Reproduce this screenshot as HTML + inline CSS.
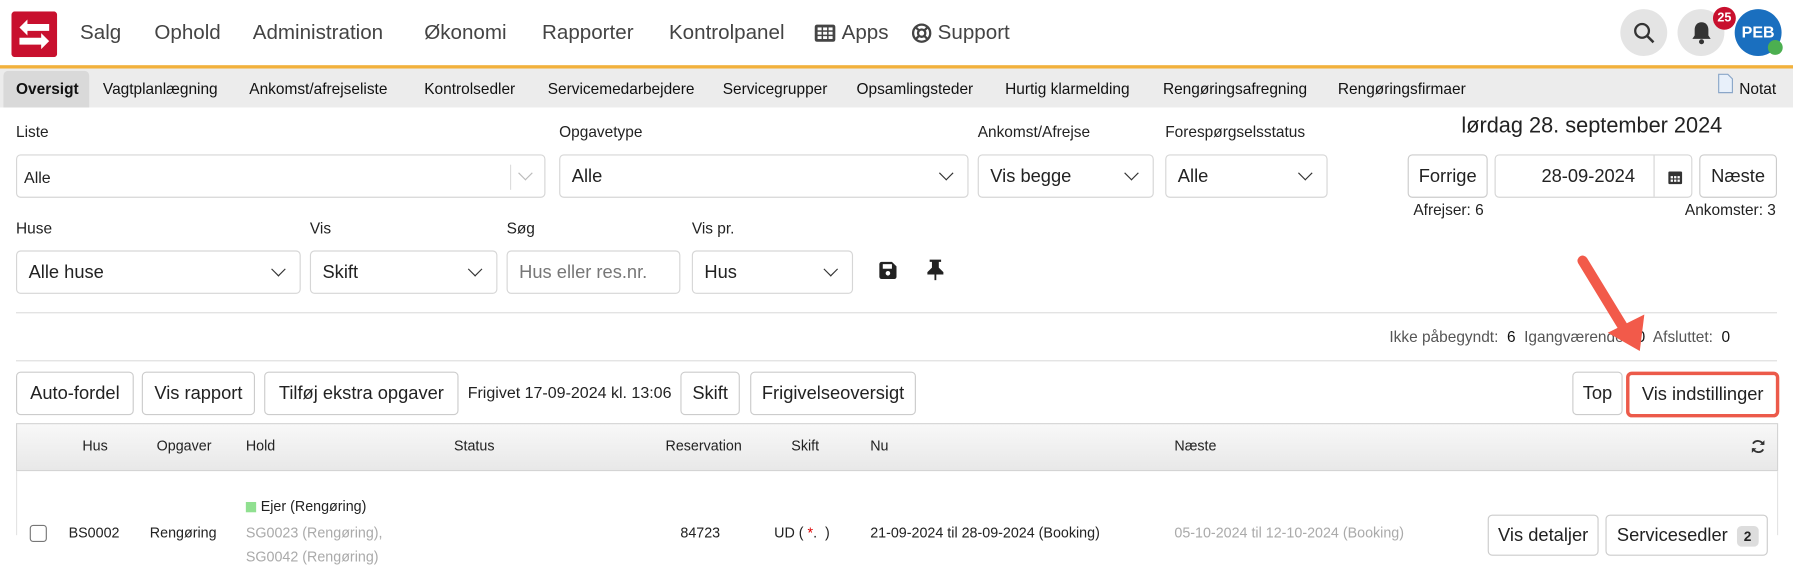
<!DOCTYPE html>
<html><head><meta charset="utf-8"><style>
*{box-sizing:border-box;margin:0;padding:0}
html,body{width:1793px;height:535px;overflow:hidden;background:#fff}
#r{position:absolute;left:0;top:0;width:1568px;height:468px;transform:scale(1.1435);transform-origin:0 0;font-family:"Liberation Sans Narrow","Liberation Sans",sans-serif;color:#222}
.a{position:absolute;white-space:nowrap}
.nav{font-family:"Liberation Sans",sans-serif;font-size:18px;color:#444;top:18px}
.sub{font-size:13.5px;top:70px;color:#111}
.lbl{font-size:13.5px;color:#222}
.box{position:absolute;border:1px solid #d6d6d6;border-radius:4px;background:#fff;font-size:16px;padding-left:10px;padding-top:2px;display:flex;align-items:center}
.chev{position:absolute;right:14px;top:11px;width:9px;height:9px;border-right:1.6px solid #333;border-bottom:1.6px solid #333;transform:rotate(45deg)}
.btn{position:absolute;border:1px solid #ccc;border-radius:4px;background:#fff;font-size:16px;display:flex;align-items:center;justify-content:center;color:#222;padding-top:2px}
.th{font-size:12.5px;top:383px;color:#222}
.td{font-size:12.5px;color:#222}
</style></head><body><div id="r">
<svg class="a" style="left:10px;top:10px" width="40" height="40" viewBox="0 0 40 40"><rect width="40" height="40" rx="3" fill="#c8102e"/><path d="M14 7 L7 14 L14 21 L14 17 L33 17 L33 11 L14 11Z" fill="#fff"/><path d="M26 19 L33 26 L26 33 L26 29 L7 29 L7 23 L26 23Z" fill="#fff"/></svg>
<div class="a nav" style="left:70px">Salg</div>
<div class="a nav" style="left:135px">Ophold</div>
<div class="a nav" style="left:221px">Administration</div>
<div class="a nav" style="left:371px">Økonomi</div>
<div class="a nav" style="left:474px">Rapporter</div>
<div class="a nav" style="left:585px">Kontrolpanel</div>
<svg class="a" style="left:712px;top:21px" width="19" height="16" viewBox="0 0 19 16"><rect x="0.5" y="0.5" width="18" height="15" rx="2" fill="#444"/><g fill="#fff"><rect x="3" y="3" width="3.5" height="2.5"/><rect x="7.8" y="3" width="3.5" height="2.5"/><rect x="12.6" y="3" width="3.5" height="2.5"/><rect x="3" y="6.8" width="3.5" height="2.5"/><rect x="7.8" y="6.8" width="3.5" height="2.5"/><rect x="12.6" y="6.8" width="3.5" height="2.5"/><rect x="3" y="10.6" width="3.5" height="2.5"/><rect x="7.8" y="10.6" width="3.5" height="2.5"/><rect x="12.6" y="10.6" width="3.5" height="2.5"/></g></svg>
<div class="a nav" style="left:736px">Apps</div>
<svg class="a" style="left:797px;top:20px" width="18" height="18" viewBox="0 0 18 18"><circle cx="9" cy="9" r="7.5" fill="none" stroke="#444" stroke-width="2"/><circle cx="9" cy="9" r="3.2" fill="none" stroke="#444" stroke-width="2"/><path d="M4 4l3 3M14 4l-3 3M4 14l3-3M14 14l-3-3" stroke="#444" stroke-width="2"/></svg>
<div class="a nav" style="left:820px">Support</div>
<div class="a" style="left:1417px;top:8px;width:41px;height:41px;border-radius:50%;background:#e4e4e4"></div>
<svg class="a" style="left:1428px;top:19px" width="20" height="20" viewBox="0 0 20 20"><circle cx="8" cy="8" r="6" fill="none" stroke="#333" stroke-width="2"/><path d="M12.5 12.5L18 18" stroke="#333" stroke-width="2.2"/></svg>
<div class="a" style="left:1467px;top:8px;width:41px;height:41px;border-radius:50%;background:#e4e4e4"></div>
<svg class="a" style="left:1479px;top:18px" width="18" height="22" viewBox="0 0 18 22"><path d="M9 1.5c-4 0-6 3-6 6.5v5L1 16h16l-2-3V8c0-3.5-2-6.5-6-6.5z" fill="#333"/><circle cx="9" cy="18.5" r="2.2" fill="#333"/></svg>
<div class="a" style="left:1517px;top:8px;width:41px;height:41px;border-radius:50%;background:#1a6fbf;color:#fff;font-family:'Liberation Sans',sans-serif;font-size:14px;font-weight:bold;text-align:center;line-height:41px">PEB</div>
<div class="a" style="left:1546px;top:35px;width:13px;height:13px;border-radius:50%;background:#4caf50"></div>
<div class="a" style="left:1498px;top:6px;width:20px;height:20px;border-radius:50%;background:#c8102e;color:#fff;font-family:'Liberation Sans',sans-serif;font-size:11px;font-weight:bold;text-align:center;line-height:20px">25</div>
<div class="a" style="left:0;top:57px;width:1568px;height:3px;background:#f2b13c"></div>
<div class="a" style="left:0;top:60px;width:1568px;height:34px;background:#ececec"></div>
<div class="a" style="left:3px;top:62px;width:75px;height:32px;background:#d9d9d9;border-radius:4px 4px 0 0"></div>
<div class="a sub" style="left:14px;font-weight:bold">Oversigt</div>
<div class="a sub" style="left:90px">Vagtplanlægning</div>
<div class="a sub" style="left:218px">Ankomst/afrejseliste</div>
<div class="a sub" style="left:371px">Kontrolsedler</div>
<div class="a sub" style="left:479px">Servicemedarbejdere</div>
<div class="a sub" style="left:632px">Servicegrupper</div>
<div class="a sub" style="left:749px">Opsamlingsteder</div>
<div class="a sub" style="left:879px">Hurtig klarmelding</div>
<div class="a sub" style="left:1017px">Rengøringsafregning</div>
<div class="a sub" style="left:1170px">Rengøringsfirmaer</div>
<svg class="a" style="left:1502px;top:64px" width="14" height="18" viewBox="0 0 14 18"><path d="M1 1h8l4 4v12H1z" fill="#e8f0fa" stroke="#8aa6c8"/></svg>
<div class="a sub" style="left:1521px">Notat</div>
<div class="a lbl" style="left:14px;top:108px">Liste</div>
<div class="a lbl" style="left:489px;top:108px">Opgavetype</div>
<div class="a lbl" style="left:855px;top:108px">Ankomst/Afrejse</div>
<div class="a lbl" style="left:1019px;top:108px">Forespørgselsstatus</div>
<div class="box" style="left:14px;top:135px;width:463px;height:38px;font-size:14px;padding-left:6px">Alle<div class="a" style="left:431px;top:8px;width:1px;height:22px;background:#ddd"></div><div class="chev" style="border-color:#bbb;right:12px"></div></div>
<div class="box" style="left:489px;top:135px;width:358px;height:38px">Alle<div class="chev"></div></div>
<div class="box" style="left:855px;top:135px;width:154px;height:38px">Vis begge<div class="chev"></div></div>
<div class="box" style="left:1019px;top:135px;width:142px;height:38px">Alle<div class="chev"></div></div>
<div class="a" style="left:1278px;top:100px;font-size:19px;color:#222">lørdag 28. september 2024</div>
<div class="btn" style="left:1231px;top:135px;width:70px;height:38px">Forrige</div>
<div class="box" style="left:1307px;top:135px;width:173px;height:38px;padding-left:40px">28-09-2024
<svg class="a" style="left:150px;top:12px" width="14" height="14" viewBox="0 0 14 14"><rect x="1" y="2" width="12" height="11" rx="1" fill="#333"/><g fill="#fff"><rect x="3" y="6" width="2" height="2"/><rect x="6" y="6" width="2" height="2"/><rect x="9" y="6" width="2" height="2"/><rect x="3" y="9" width="2" height="2"/><rect x="6" y="9" width="2" height="2"/><rect x="9" y="9" width="2" height="2"/></g></svg>
<div class="a" style="left:138px;top:0;width:1px;height:36px;background:#d6d6d6"></div></div>
<div class="btn" style="left:1486px;top:135px;width:68px;height:38px">Næste</div>
<div class="a lbl" style="left:1236px;top:176px">Afrejser: 6</div>
<div class="a lbl" style="right:15px;top:176px">Ankomster: 3</div>
<div class="a lbl" style="left:14px;top:192px">Huse</div>
<div class="a lbl" style="left:271px;top:192px">Vis</div>
<div class="a lbl" style="left:443px;top:192px">Søg</div>
<div class="a lbl" style="left:605px;top:192px">Vis pr.</div>
<div class="box" style="left:14px;top:219px;width:249px;height:38px">Alle huse<div class="chev"></div></div>
<div class="box" style="left:271px;top:219px;width:164px;height:38px">Skift<div class="chev"></div></div>
<div class="box" style="left:443px;top:219px;width:152px;height:38px;color:#777">Hus eller res.nr.</div>
<div class="box" style="left:605px;top:219px;width:141px;height:38px">Hus<div class="chev"></div></div>
<svg class="a" style="left:768px;top:228px" width="17" height="17" viewBox="0 0 17 17"><path d="M1 3a2 2 0 0 1 2-2h9l4 4v9a2 2 0 0 1-2 2H3a2 2 0 0 1-2-2z" fill="#222"/><rect x="4" y="3" width="8" height="4" fill="#fff"/><circle cx="8.5" cy="11" r="2" fill="#fff"/></svg>
<svg class="a" style="left:810px;top:226px" width="16" height="20" viewBox="0 0 16 20"><path d="M3 1h10v2h-2v5l4 4v2H1v-2l4-4V3H3z" fill="#222"/><rect x="7.2" y="14" width="1.6" height="5" fill="#222"/></svg>
<div class="a" style="left:14px;top:273px;width:1540px;height:1px;background:#ddd"></div>
<div class="a lbl" style="right:55px;top:287px;color:#555">Ikke påbegyndt: <span style="color:#111">&nbsp;6</span>&nbsp; Igangværende: <span style="color:#111">&nbsp;0</span>&nbsp; Afsluttet: <span style="color:#111">&nbsp;0</span></div>
<div class="a" style="left:14px;top:315px;width:1540px;height:1px;background:#ddd"></div>
<div class="btn" style="left:14px;top:325px;width:103px;height:38px">Auto-fordel</div>
<div class="btn" style="left:124px;top:325px;width:99px;height:38px">Vis rapport</div>
<div class="btn" style="left:231px;top:325px;width:170px;height:38px">Tilføj ekstra opgaver</div>
<div class="a" style="left:409px;top:335px;font-size:14px">Frigivet 17-09-2024 kl. 13:06</div>
<div class="btn" style="left:595px;top:325px;width:52px;height:38px">Skift</div>
<div class="btn" style="left:656px;top:325px;width:145px;height:38px">Frigivelseoversigt</div>
<div class="btn" style="left:1375px;top:325px;width:44px;height:38px">Top</div>
<div class="btn" style="left:1422px;top:325px;width:134px;height:40px;border:3px solid #ec5a4a;border-radius:5px">Vis indstillinger</div>
<svg class="a" style="left:1370px;top:215px" width="80" height="100" viewBox="0 0 80 100"><path d="M14 13 L50 72" stroke="#f25a4a" stroke-width="9" stroke-linecap="round"/><path d="M36 76 L68 60 L64 92Z" fill="#f25a4a"/></svg>
<div class="a" style="left:14px;top:370px;width:1541px;height:42px;border:1px solid #d4d4d4;background:linear-gradient(#f8f8f8,#e8e8e8)"></div>
<div class="a th" style="left:72px">Hus</div>
<div class="a th" style="left:137px">Opgaver</div>
<div class="a th" style="left:215px">Hold</div>
<div class="a th" style="left:397px">Status</div>
<div class="a th" style="left:582px">Reservation</div>
<div class="a th" style="left:692px">Skift</div>
<div class="a th" style="left:761px">Nu</div>
<div class="a th" style="left:1027px">Næste</div>
<svg class="a" style="left:1531px;top:384px" width="13" height="13" viewBox="0 0 13 13"><path d="M11 5A5 5 0 0 0 2 4M2 8a5 5 0 0 0 9 1" fill="none" stroke="#333" stroke-width="1.6"/><path d="M12 1v4H8zM1 12V8h4z" fill="#333"/></svg>
<div class="a" style="left:14px;top:412px;width:1541px;height:56px;border-left:1px solid #e4e4e4;border-right:1px solid #e4e4e4"></div>
<div class="a" style="left:26px;top:459px;width:15px;height:15px;border:1.5px solid #777;border-radius:3px;background:#fff"></div>
<div class="a td" style="left:60px;top:459px">BS0002</div>
<div class="a td" style="left:131px;top:459px">Rengøring</div>
<div class="a" style="left:215px;top:439px;width:9px;height:9px;background:#90e090"></div>
<div class="a td" style="left:228px;top:436px">Ejer (Rengøring)</div>
<div class="a td" style="left:215px;top:459px;color:#aaa">SG0023 (Rengøring),</div>
<div class="a td" style="left:215px;top:480px;color:#aaa">SG0042 (Rengøring)</div>
<div class="a td" style="left:595px;top:459px">84723</div>
<div class="a td" style="left:677px;top:459px">UD ( <span style="color:#d00">*</span>.&nbsp; )</div>
<div class="a td" style="left:761px;top:459px">21-09-2024 til 28-09-2024 (Booking)</div>
<div class="a td" style="left:1027px;top:459px;color:#aaa">05-10-2024 til 12-10-2024 (Booking)</div>
<div class="btn" style="left:1301px;top:450px;width:97px;height:36px">Vis detaljer</div>
<div class="btn" style="left:1404px;top:450px;width:142px;height:36px;justify-content:flex-start;padding-left:9px">Servicesedler<span style="display:inline-block;margin-left:8px;background:#ddd;border-radius:4px;font-size:12px;font-weight:bold;padding:2px 6px">2</span></div>
</div></body></html>
